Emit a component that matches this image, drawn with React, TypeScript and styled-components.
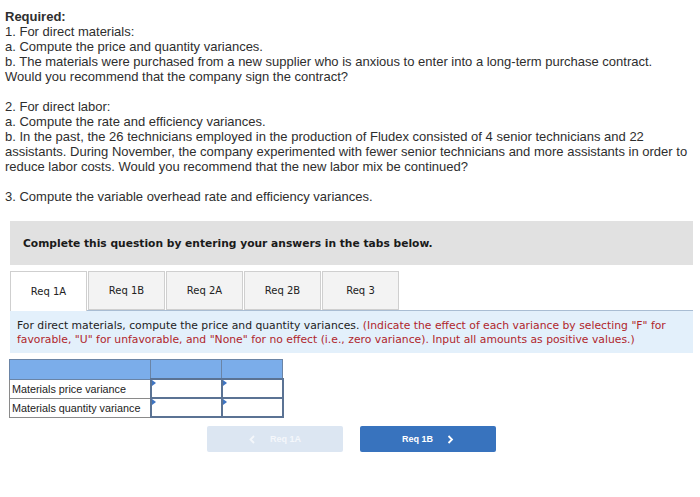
import React, { useState } from 'react';
import styled, { createGlobalStyle } from 'styled-components';

const Global = createGlobalStyle`
  body {
    margin: 0;
    background: #fff;
    font-family: "Liberation Sans", Arial, sans-serif;
    color: #333;
  }
`;

const Page = styled.div`
  width: 700px;
  padding: 9px 0 0 0;
`;

const Question = styled.div`
  padding: 0 5px;
  font-size: 13px;
  line-height: 15px;
  color: #2e2e2e;
`;

const Para = styled.p`
  margin: 0 0 15px 0;
`;

const Strong = styled.strong`
  font-weight: bold;
`;

const Panel = styled.div`
  margin: 17px 7px 0 10px;
`;

const Banner = styled.div`
  height: 44px;
  background: #e1e1e1;
  display: flex;
  align-items: center;
  padding-left: 13px;
  font-family: "DejaVu Sans", Verdana, sans-serif;
  font-weight: bold;
  font-size: 10.7px;
  color: #1a1a1a;
`;

const TabRow = styled.div`
  margin-top: 6px;
  display: flex;
  gap: 1px;
  border-bottom: 1px solid #a9bdd3;
`;

const Tab = styled.button<{ $active?: boolean }>`
  width: 77px;
  margin-bottom: ${(p) => (p.$active ? '-1px' : '0')};
  height: ${(p) => (p.$active ? '40px' : '39px')};
  border: 1px solid #cfcfcf;
  border-bottom: ${(p) => (p.$active ? 'none' : '1px solid #cfcfcf')};
  background: ${(p) => (p.$active ? '#fff' : '#f3f3f3')};
  font-family: "DejaVu Sans", Verdana, sans-serif;
  font-size: 10px;
  color: #222;
  padding: 0;
  cursor: pointer;
`;

const Instruction = styled.div`
  background: #e3f0fb;
  padding: 8px 7px 7px 7px;
  font-family: "DejaVu Sans", Verdana, sans-serif;
  font-size: 10.8px;
  line-height: 13.5px;
  color: #222;
`;

const Red = styled.span`
  color: #b0262c;
`;

const Table = styled.table`
  margin: 6px 0 0 -1px;
  border-collapse: collapse;
  font-family: "Liberation Sans", Arial, sans-serif;
  font-size: 10.8px;
  color: #222;
`;

const HeadCell = styled.th<{ $w: number }>`
  width: ${(p) => p.$w}px;
  height: 18px;
  background: #7badea;
  border: 1px solid #6a84a6;
  padding: 0;
`;

const LabelCell = styled.td`
  height: 18px;
  border: 1px solid #8a8a8a;
  padding: 0 2px;
  white-space: nowrap;
  background: #fff;
`;

const InputCell = styled.td`
  position: relative;
  height: 16px;
  border: 2px solid #5b7394;
  background: #fff;
  padding: 0;
  &::before {
    content: '';
    position: absolute;
    left: 0;
    top: 0;
    border-top: 3px solid transparent;
    border-bottom: 3px solid transparent;
    border-left: 4px solid #3e74c2;
  }
`;

const NavRow = styled.div`
  display: flex;
  justify-content: center;
  gap: 17px;
  margin-top: 8px;
`;

const NavButton = styled.button<{ $disabled?: boolean }>`
  width: 136px;
  height: 26px;
  border: none;
  border-radius: 2px;
  background: ${(p) => (p.$disabled ? '#dce6f2' : '#3873be')};
  color: ${(p) => (p.$disabled ? '#f4f7fb' : '#fff')};
  font-family: "Liberation Sans", Arial, sans-serif;
  font-weight: bold;
  font-size: 9px;
  display: flex;
  align-items: center;
  justify-content: center;
  gap: 14px;
  padding: 0;
`;

function Chevron({ dir }: { dir: 'left' | 'right' }) {
  const d = dir === 'left' ? 'M5 1 L1.5 4.5 L5 8' : 'M1.5 1 L5 4.5 L1.5 8';
  return (
    <svg width="7" height="9" viewBox="0 0 7 9" fill="none">
      <path d={d} stroke="currentColor" strokeWidth="1.8" />
    </svg>
  );
}

const tabs = ['Req 1A', 'Req 1B', 'Req 2A', 'Req 2B', 'Req 3'];

export default function App() {
  const [active, setActive] = useState(0);

  return (
    <Page>
      <Global />
      <Question>
        <Para>
          <Strong>Required:</Strong>
          <br />
          1. For direct materials:
          <br />
          a. Compute the price and quantity variances.
          <br />
          b. The materials were purchased from a new supplier who is anxious to enter into a long-term purchase contract.
          <br />
          Would you recommend that the company sign the contract?
        </Para>
        <Para>
          2. For direct labor:
          <br />
          a. Compute the rate and efficiency variances.
          <br />
          b. In the past, the 26 technicians employed in the production of Fludex consisted of 4 senior technicians and 22
          assistants. During November, the company experimented with fewer senior technicians and more assistants in order to
          reduce labor costs. Would you recommend that the new labor mix be continued?
        </Para>
        <Para>3. Compute the variable overhead rate and efficiency variances.</Para>
      </Question>

      <Panel>
        <Banner>Complete this question by entering your answers in the tabs below.</Banner>
        <TabRow>
          {tabs.map((t, i) => (
            <Tab key={t} $active={i === active} onClick={() => setActive(i)}>
              {t}
            </Tab>
          ))}
        </TabRow>
        <Instruction>
          For direct materials, compute the price and quantity variances.{' '}
          <Red>
            (Indicate the effect of each variance by selecting "F" for favorable, "U" for unfavorable, and "None" for no
            effect (i.e., zero variance). Input all amounts as positive values.)
          </Red>
        </Instruction>

        <Table>
          <thead>
            <tr>
              <HeadCell $w={140} />
              <HeadCell $w={70} />
              <HeadCell $w={60} />
            </tr>
          </thead>
          <tbody>
            <tr>
              <LabelCell>Materials price variance</LabelCell>
              <InputCell />
              <InputCell />
            </tr>
            <tr>
              <LabelCell>Materials quantity variance</LabelCell>
              <InputCell />
              <InputCell />
            </tr>
          </tbody>
        </Table>

        <NavRow>
          <NavButton $disabled>
            <Chevron dir="left" />
            <span>Req 1A</span>
          </NavButton>
          <NavButton>
            <span>Req 1B</span>
            <Chevron dir="right" />
          </NavButton>
        </NavRow>
      </Panel>
    </Page>
  );
}
